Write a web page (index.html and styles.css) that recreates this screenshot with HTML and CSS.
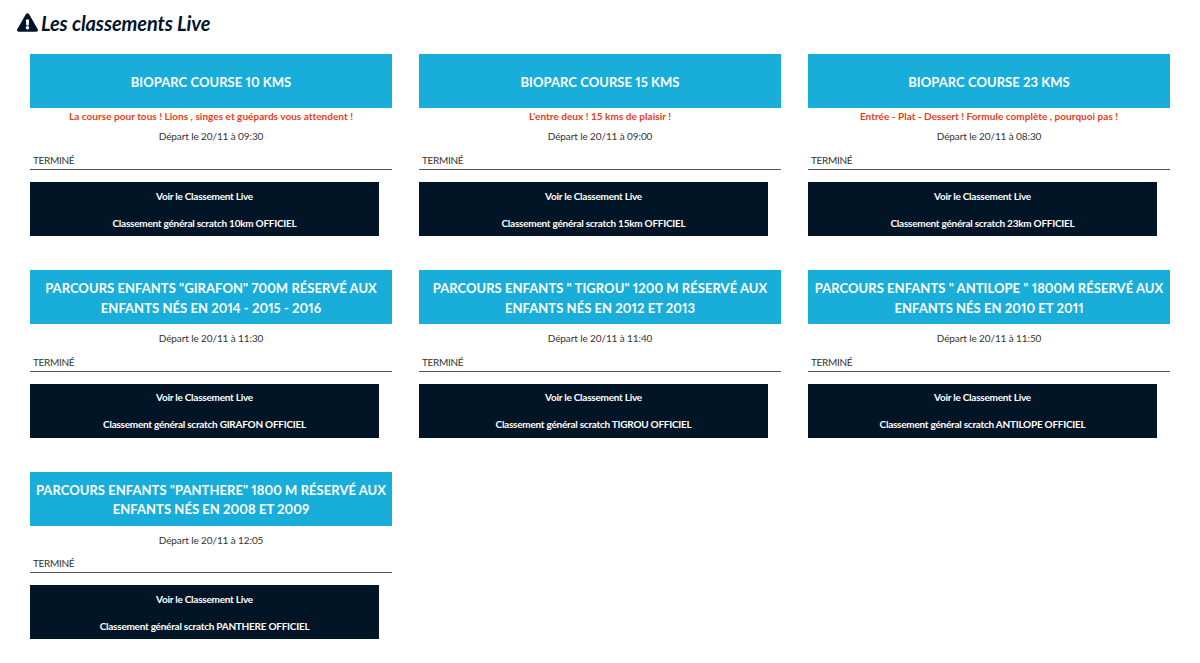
FILE: index.html
```html
<!DOCTYPE html>
<html lang="fr">
<head>
  <meta charset="UTF-8">
  <title>Les classements Live</title>
  <link rel="stylesheet" href="styles.css">
</head>
<body>

<h1 class="page-title">
  <svg class="warn-icon" viewBox="0 0 576 512" aria-hidden="true"><path d="M569.5 440c18.500 32-4.700 72-41.600 72H48.100C11.100 512-12 472 6.500 440L246.400 24c18.500-32 64.700-32 83.200 0l239.900 416zM288 354c-25.400 0-46 20.600-46 46s20.600 46 46 46 46-20.600 46-46-20.600-46-46-46zm-43.700-165.400l7.400 136c.3 6.400 5.600 11.400 12 11.400h48.600c6.400 0 11.700-5 12-11.400l7.400-136c.4-6.900-5.100-12.600-12-12.600h-63.400c-6.900 0-12.400 5.700-12 12.600z"/></svg>
  Les classements Live
</h1>

<div class="race-grid">

  <div class="race">
    <div class="race-name">BIOPARC COURSE 10 KMS</div>
    <div class="race-tagline">La course pour tous ! Lions , singes et guépards vous attendent !</div>
    <div class="race-start">Départ le 20/11 à 09:30</div>
    <div class="race-status">TERMINÉ</div>
    <div class="race-links">
      <a href="#">Voir le Classement Live</a>
      <a href="#">Classement général scratch 10km OFFICIEL</a>
    </div>
  </div>

  <div class="race">
    <div class="race-name">BIOPARC COURSE 15 KMS</div>
    <div class="race-tagline">L'entre deux ! 15 kms de plaisir !</div>
    <div class="race-start">Départ le 20/11 à 09:00</div>
    <div class="race-status">TERMINÉ</div>
    <div class="race-links">
      <a href="#">Voir le Classement Live</a>
      <a href="#">Classement général scratch 15km OFFICIEL</a>
    </div>
  </div>

  <div class="race">
    <div class="race-name">BIOPARC COURSE 23 KMS</div>
    <div class="race-tagline">Entrée - Plat - Dessert ! Formule complète , pourquoi pas !</div>
    <div class="race-start">Départ le 20/11 à 08:30</div>
    <div class="race-status">TERMINÉ</div>
    <div class="race-links">
      <a href="#">Voir le Classement Live</a>
      <a href="#">Classement général scratch 23km OFFICIEL</a>
    </div>
  </div>

  <div class="race">
    <div class="race-name">PARCOURS ENFANTS "GIRAFON" 700M RÉSERVÉ AUX ENFANTS NÉS EN 2014 - 2015 - 2016</div>
    <div class="race-start">Départ le 20/11 à 11:30</div>
    <div class="race-status">TERMINÉ</div>
    <div class="race-links">
      <a href="#">Voir le Classement Live</a>
      <a href="#">Classement général scratch GIRAFON OFFICIEL</a>
    </div>
  </div>

  <div class="race">
    <div class="race-name">PARCOURS ENFANTS " TIGROU" 1200 M RÉSERVÉ AUX ENFANTS NÉS EN 2012 ET 2013</div>
    <div class="race-start">Départ le 20/11 à 11:40</div>
    <div class="race-status">TERMINÉ</div>
    <div class="race-links">
      <a href="#">Voir le Classement Live</a>
      <a href="#">Classement général scratch TIGROU OFFICIEL</a>
    </div>
  </div>

  <div class="race">
    <div class="race-name">PARCOURS ENFANTS " ANTILOPE " 1800M RÉSERVÉ AUX ENFANTS NÉS EN 2010 ET 2011</div>
    <div class="race-start">Départ le 20/11 à 11:50</div>
    <div class="race-status">TERMINÉ</div>
    <div class="race-links">
      <a href="#">Voir le Classement Live</a>
      <a href="#">Classement général scratch ANTILOPE OFFICIEL</a>
    </div>
  </div>

  <div class="race">
    <div class="race-name">PARCOURS ENFANTS "PANTHERE" 1800 M RÉSERVÉ AUX ENFANTS NÉS EN 2008 ET 2009</div>
    <div class="race-start">Départ le 20/11 à 12:05</div>
    <div class="race-status">TERMINÉ</div>
    <div class="race-links">
      <a href="#">Voir le Classement Live</a>
      <a href="#">Classement général scratch PANTHERE OFFICIEL</a>
    </div>
  </div>

</div>

</body>
</html>
```

FILE: styles.css
```css
body {
  margin: 0;
  background: #fff;
  font-family: Lato, 'Open Sans', sans-serif;
  color: #333;
}
.page-title {
  display: flex;
  align-items: center;
  gap: 3px;
  height: 54.4px;
  margin: 0;
  padding: 0 0 9px 17px;
  box-sizing: border-box;
  font-size: 20px;
  font-weight: 700;
  font-style: italic;
  letter-spacing: -0.1px;
  color: #02162a;
}
.warn-icon {
  width: 21px;
  height: 19px;
  fill: #02162a;
}
.race-grid {
  display: grid;
  grid-template-columns: repeat(3, 362px);
  column-gap: 27px;
  row-gap: 34.2px;
  padding-left: 30px;
}
.race-name {
  display: flex;
  align-items: center;
  justify-content: center;
  height: 54px;
  padding-top: 3px;
  box-sizing: border-box;
  background: #19aed9;
  color: #fff;
  font-size: 13px;
  font-weight: 700;
  font-variant-numeric: proportional-nums;
  letter-spacing: 0.05px;
  line-height: 19.5px;
  text-align: center;
}
.race-tagline {
  height: 14.4px;
  color: #ec3a17;
  font-size: 10px;
  font-weight: 700;
  letter-spacing: 0.03px;
  line-height: 16px;
  text-align: center;
}
.race-start {
  margin-top: 6.6px;
  height: 14px;
  font-size: 10px;
  letter-spacing: -0.1px;
  line-height: 14px;
  text-align: center;
}
.race-status {
  height: 20px;
  margin-top: 5.8px;
  padding-left: 3px;
  border-bottom: 1px solid #555;
  font-size: 10px;
  letter-spacing: -0.3px;
  line-height: 22px;
  color: #333;
}
.race-links {
  display: flex;
  flex-direction: column;
  justify-content: space-around;
  width: 349px;
  height: 54px;
  margin-top: 12px;
  background: #021526;
  text-align: center;
}
.race-links a {
  color: #fff;
  font-size: 10px;
  font-weight: 700;
  letter-spacing: -0.25px;
  text-decoration: none;
}
```
